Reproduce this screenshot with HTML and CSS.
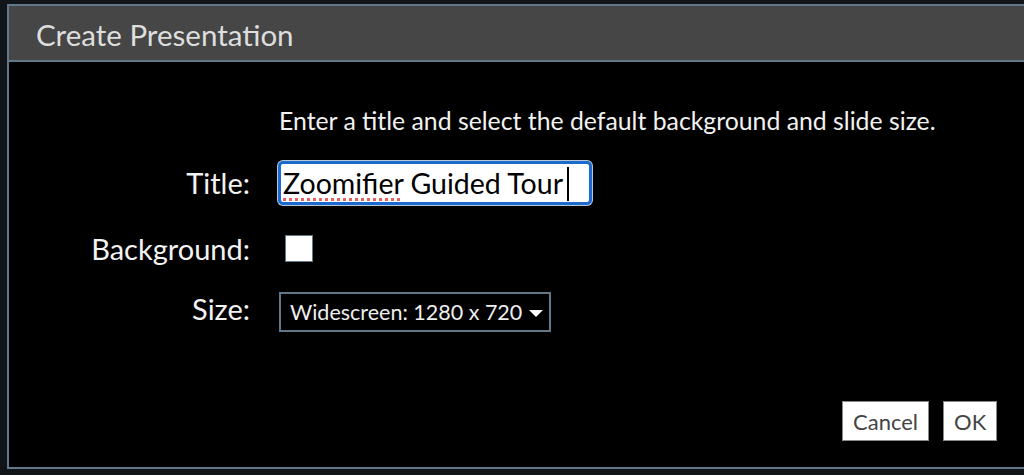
FILE: index.html
```html
<!DOCTYPE html>
<html lang="en">
<head>
    <meta charset="UTF-8">
    <meta name="viewport" content="width=device-width, initial-scale=1.0">
    <title>Create Presentation</title>
    <link rel="stylesheet" href="styles.css">
</head>
<body>
    <div class="dialog">
        <div class="dialog-header">Create Presentation</div>
        <div class="dialog-body">
            <p class="intro">Enter a title and select the default background and slide size.</p>
            <div class="form">
                <label class="label">Title:</label>
                <div class="title-input">
                    <span class="misspelled">Zoomifier</span> Guided Tour<span class="caret"></span>
                </div>

                <label class="label">Background:</label>
                <span class="swatch"></span>

                <label class="label label-size">Size:</label>
                <div class="select">Widescreen: 1280 x 720 <span class="arrow"></span></div>
            </div>
            <div class="buttons">
                <button class="button">Cancel</button>
                <button class="button">OK</button>
            </div>
        </div>
    </div>
</body>
</html>
```

FILE: styles.css
```css
body {
    font-family: Lato, "Open Sans", sans-serif;
    background-color: #111518;
    color: #fff;
    margin: 0;
    padding: 4px 0 0 7px;
    overflow: hidden;
}
.dialog {
    width: 1040px;
    height: 461px;
    border: 2px solid #61778a;
    background: #000;
    display: flex;
    flex-direction: column;
}
.dialog-header {
    background: #464646;
    color: #dedede;
    font-size: 29.5px;
    height: 54px;
    line-height: 57px;
    padding-left: 27px;
    border-bottom: 2px solid #61778a;
}
.dialog-body {
    flex: 1;
    display: flex;
    flex-direction: column;
}
.intro {
    margin: 44px 0 0 270px;
    font-size: 24.8px;
    line-height: 30px;
    color: #f2f2f2;
}
.form {
    display: grid;
    grid-template-columns: 241px auto;
    justify-content: start;
    align-items: center;
    column-gap: 28px;
    row-gap: 30px;
    margin-top: 25px;
}
.label {
    text-align: right;
    font-size: 29px;
    line-height: 26px;
    color: #f2f2f2;
}
.label-size {
    margin-bottom: 7px;
}
.title-input {
    box-sizing: border-box;
    width: 314px;
    height: 44px;
    background: #fff;
    color: #000;
    border: 3px solid #1a6ad0;
    border-radius: 5px;
    box-shadow: 0 0 0 1px #b9c7d6;
    font-size: 28.5px;
    line-height: 38px;
    padding-left: 2px;
    white-space: nowrap;
}
.misspelled {
    text-decoration: underline dotted #ec5f5f;
    text-decoration-thickness: 3px;
    text-underline-offset: 4px;
}
.caret {
    display: inline-block;
    width: 2px;
    height: 34px;
    background: #000;
    vertical-align: -7px;
    margin-left: 4px;
}
.swatch {
    display: block;
    box-sizing: border-box;
    width: 28px;
    height: 27px;
    margin-left: 7px;
    background: #fff;
    border: 1px solid #61778a;
}
.select {
    box-sizing: border-box;
    width: 272px;
    height: 40px;
    margin-left: 1px;
    border: 2px solid #61778a;
    padding: 0 9px;
    font-size: 21.5px;
    line-height: 36px;
    color: #eee;
    white-space: nowrap;
}
.arrow {
    display: inline-block;
    width: 0;
    height: 0;
    margin-left: 1px;
    border-left: 7px solid transparent;
    border-right: 7px solid transparent;
    border-top: 7px solid #fff;
    vertical-align: 3px;
}
.buttons {
    margin-top: auto;
    display: flex;
    gap: 14px;
    padding: 0 0 26px 833px;
}
.button {
    font-family: Lato, sans-serif;
    font-size: 22px;
    color: #444;
    background: #fff;
    border: 1px solid #8a8a8a;
    border-radius: 0;
    height: 40px;
    padding: 0 10px;
}
```
